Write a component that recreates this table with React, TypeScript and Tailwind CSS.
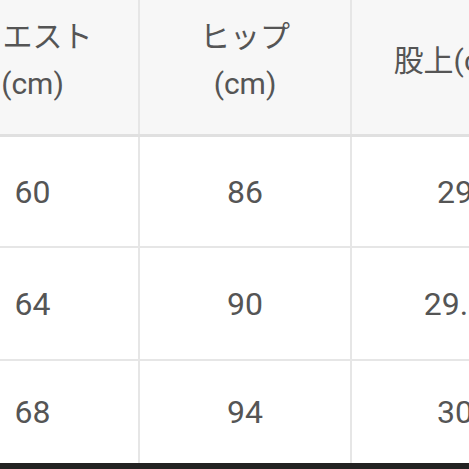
const header = [
  { lines: ["ウエスト", "(cm)"] },
  { lines: ["ヒップ", "(cm)"] },
  { lines: ["股上(cm)"] },
];

const rows = [
  ["60", "86", "29"],
  ["64", "90", "29.5"],
  ["68", "94", "30"],
];

const heights = ["h-[111px] border-b-2", "h-[113px] border-b-2", "h-[102px]"];

export default function App() {
  return (
    <div
      className="w-[469px] h-[469px] overflow-hidden bg-[#222] text-[#555]"
      style={{ fontFamily: 'Roboto, "Noto Sans CJK JP", sans-serif' }}
    >
      <div className="w-[640px] -ml-[73px] bg-white">
        <div className="grid grid-cols-[213px_212px_208px] h-[137px] bg-[#f7f7f7] border-b-[3px] border-[#e0e0e0]">
          {header.map((h, i) => (
            <div
              key={i}
              className="flex flex-col items-center justify-center pb-[14px] border-r-2 border-[#e6e6e6] text-[30px] leading-[47px]"
            >
              {h.lines.map((l) => (
                <span key={l}>{l}</span>
              ))}
            </div>
          ))}
        </div>
        {rows.map((r, ri) => (
          <div
            key={ri}
            className={`grid grid-cols-[213px_212px_208px] border-[#e6e6e6] ${heights[ri]}`}
          >
            {r.map((c, ci) => (
              <div
                key={ci}
                className="flex items-center justify-center border-r-2 border-[#e6e6e6] text-[32px]"
              >
                {c}
              </div>
            ))}
          </div>
        ))}
      </div>
    </div>
  );
}
